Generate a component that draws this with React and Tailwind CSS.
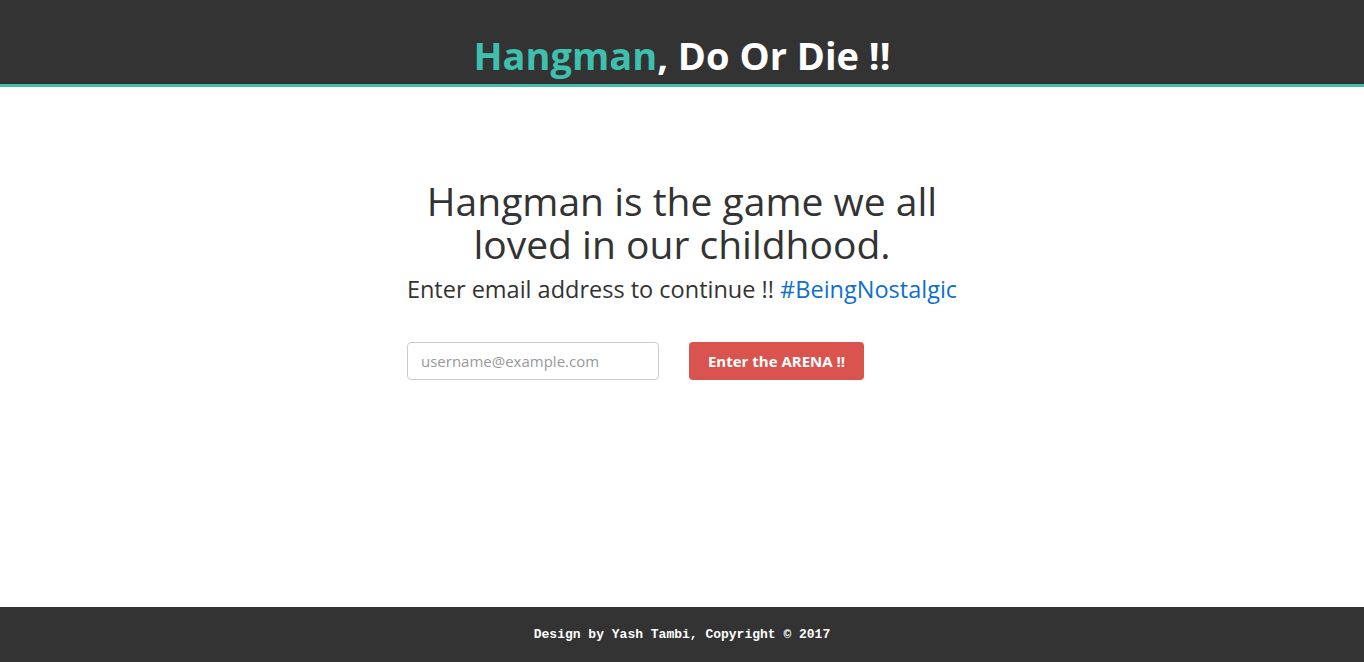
import React from 'react';

const App = () => {
  return (
    <div className="min-h-screen flex flex-col bg-white" style={{ fontFamily: '"Open Sans", "Noto Sans", sans-serif' }}>
      {/* top bar */}
      <header className="h-[87px] bg-[#333333] border-b-[3px] border-[#45bcb0] flex items-center justify-center pt-[26px]">
        <h1 className="text-[38px] font-bold text-white">
          <span className="text-[#3fbfae]">Hangman</span>, Do Or Die !!
        </h1>
      </header>

      <main className="flex-1 flex justify-center">
        <div className="w-[556px] pt-[92px] text-center">
          <h2 className="text-[39px] leading-[43px] text-[#333333] px-[10px]">
            Hangman is the game we all loved in our childhood.
          </h2>
          <h3 className="mt-[9px] text-[23.5px] leading-[30px] text-[#333333]">
            Enter email address to continue !! <span className="text-[#0f6fcf]">#BeingNostalgic</span>
          </h3>

          {/* email form */}
          <form className="mt-[38px] flex items-center gap-[30px] pl-[3px]" onSubmit={e => e.preventDefault()}>
            <input
              type="email"
              placeholder="username@example.com"
              className="w-[252px] h-[38px] px-[13px] border border-[#cccccc] rounded-[4px] text-[15px] text-[#555] placeholder:text-[#999999] outline-none"
            />
            <button
              type="submit"
              className="h-[38px] w-[175px] bg-[#d9534f] rounded-[4px] text-white text-[15px] font-bold"
            >
              Enter the ARENA !!
            </button>
          </form>
        </div>
      </main>

      <footer className="h-[55px] bg-[#333333] flex items-center justify-center">
        <p className="text-white text-[13px] font-bold" style={{ fontFamily: '"Liberation Mono", "DejaVu Sans Mono", monospace' }}>
          Design by Yash Tambi, Copyright © 2017
        </p>
      </footer>
    </div>
  );
};

export default App;
